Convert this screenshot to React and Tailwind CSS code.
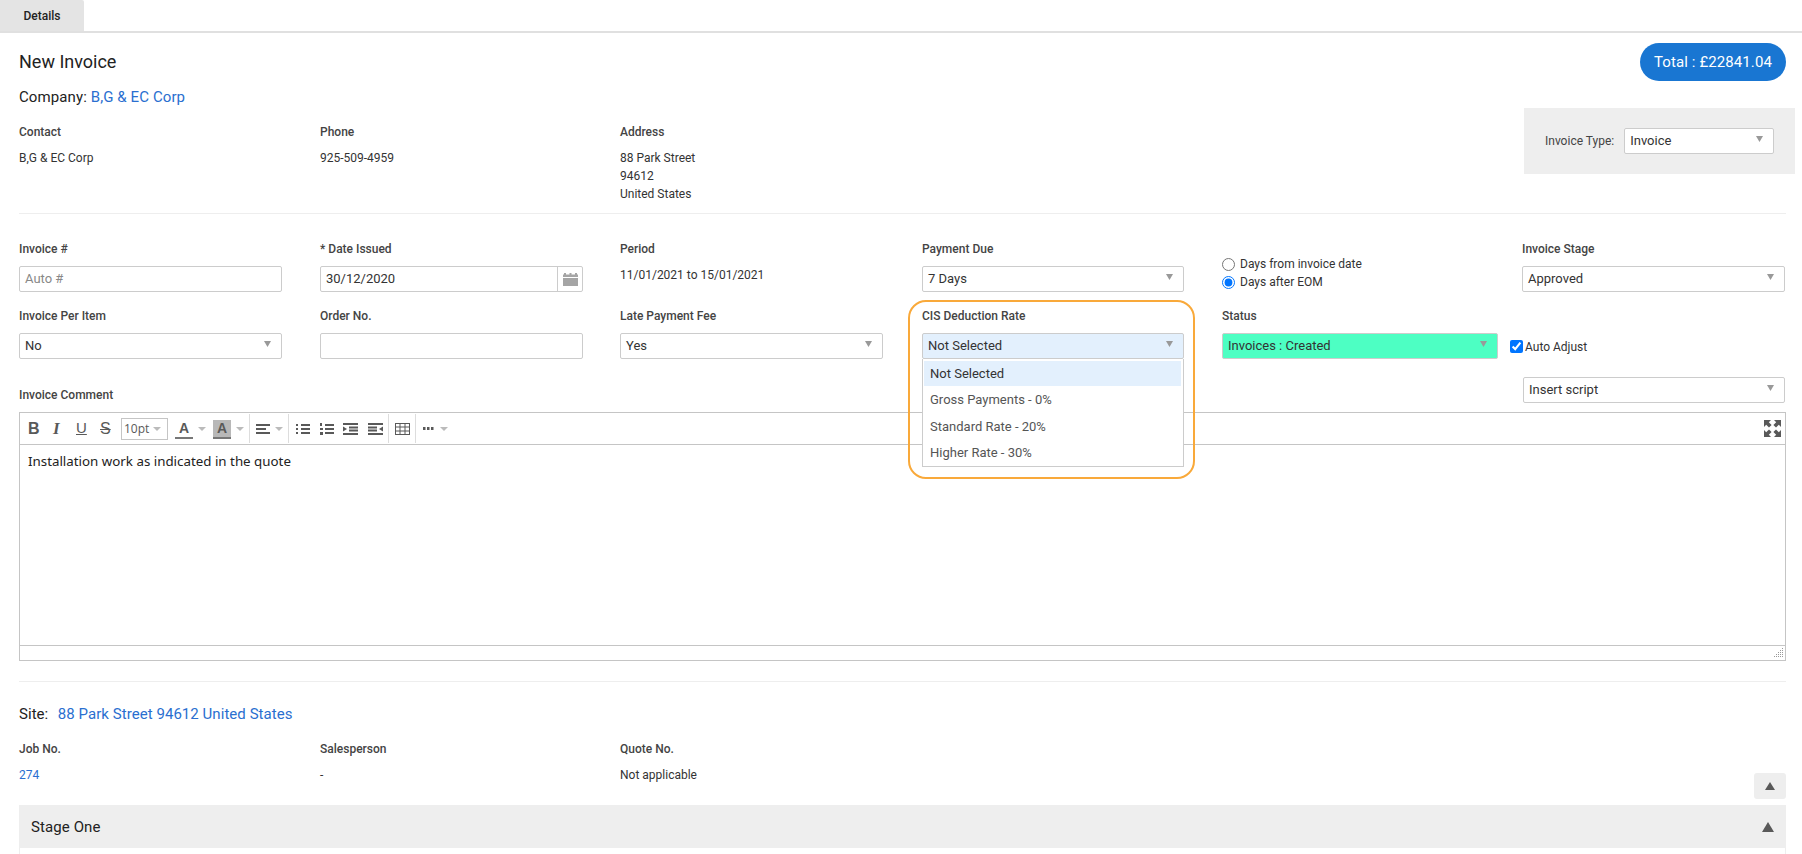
const roboto = "font-['Roboto',sans-serif]";

// ── Helpers ───────────────────────────────────────────────────────────────────
const Caret = ({ className = 'text-[#999]', w = 7, h = 6 }) => (
  <svg width={w} height={h} viewBox="0 0 8 7" preserveAspectRatio="none" className={`fill-current shrink-0 ${className}`}>
    <path d="M0 0h8L4 7z" />
  </svg>
);

const Label = ({ children }) => (
  <div className="text-[12px] leading-[18px] font-medium text-[#444]">{children}</div>
);

const Select = ({ value, width = 'w-[263px]', bg = 'bg-white' }) => (
  <div className={`flex items-center justify-between h-[26px] ${width} ${bg} rounded-[2px] border border-[#ccc] pl-[5px] pr-[10px] text-[13px] text-[#333]`}>
    <span>{value}</span>
    <Caret className="text-[#999] mb-[4px]" />
  </div>
);

const Sep = ({ className = '' }) => <div className={`w-px h-[29px] bg-[#ddd] shrink-0 ${className}`} />;

const Bars = ({ className = '', children }) => (
  <svg width="15" height="12" viewBox="0 0 15 12" className={`fill-[#595959] shrink-0 ${className}`}>{children}</svg>
);

const ArrowDown = ({ className = '' }) => <Caret className={`text-[#bbb] ${className}`} w={8} h={4} />;

function Toolbar() {
  return (
    <div className="flex items-center h-[32px] border-b border-[#c5c5c5] pl-[8px] pr-[4px] text-[#595959]">
      <span className="w-[23px] font-bold text-[16px] font-['Liberation_Sans',sans-serif]">B</span>
      <span className="w-[25px] pl-[2px] italic font-bold text-[17px] font-['Liberation_Serif',serif]">I</span>
      <span className="w-[22px] underline text-[15px] font-['Liberation_Sans',sans-serif]">U</span>
      <span className="w-[23px] pl-[2px] line-through text-[16px] font-['Liberation_Sans',sans-serif]">S</span>
      <div className="flex items-center justify-between w-[47px] h-[22px] border border-[#c5c5c5] pl-[2px] pr-[6px] text-[12px] font-['Open_Sans',sans-serif]">
        10pt <ArrowDown />
      </div>
      <div className="ml-[7px] w-[18px] h-[19px] mt-[1px] text-center text-[14px] leading-[16px] font-bold border-b-2 border-[#777] font-['Liberation_Sans',sans-serif]">A</div>
      <ArrowDown className="ml-[5px]" />
      <div className="ml-[7px] w-[18px] h-[19px] mt-[1px] text-center text-[14px] leading-[16px] font-bold bg-[#b8b8b8] border-b-2 border-[#777] font-['Liberation_Sans',sans-serif]">A</div>
      <ArrowDown className="ml-[5px]" />
      <Sep className="ml-[5px]" />
      <Bars className="ml-[6px]">
        <rect y="1" width="14" height="2" /><rect y="5" width="10" height="2" /><rect y="9" width="14" height="2" />
      </Bars>
      <ArrowDown className="ml-[4px]" />
      <Sep className="ml-[5px]" />
      <Bars className="ml-[7px]">
        <rect y="1" width="2" height="2" /><rect x="5" y="1" width="9" height="2" />
        <rect y="5" width="2" height="2" /><rect x="5" y="5" width="9" height="2" />
        <rect y="9" width="2" height="2" /><rect x="5" y="9" width="9" height="2" />
      </Bars>
      <Bars className="ml-[9px]">
        <rect y="0" width="2" height="3" /><rect x="5" y="1" width="9" height="2" />
        <rect y="5" width="3" height="2" /><rect x="5" y="5" width="9" height="2" />
        <rect y="9" width="3" height="3" /><rect x="5" y="9" width="9" height="2" />
      </Bars>
      <Bars className="ml-[8px]">
        <rect y="0" width="15" height="2" /><rect x="6" y="3.5" width="9" height="2" /><rect x="6" y="6.5" width="9" height="2" /><rect y="10" width="15" height="2" />
        <path d="M0 3.5l4 2.5-4 2.5z" />
      </Bars>
      <Bars className="ml-[10px]">
        <rect y="0" width="15" height="2" /><rect y="3.5" width="9" height="2" /><rect y="6.5" width="9" height="2" /><rect y="10" width="15" height="2" />
        <path d="M15 3.5l-4 2.5 4 2.5z" />
      </Bars>
      <Sep className="ml-[5px]" />
      <svg width="15" height="12" viewBox="0 0 15 12" className="ml-[6px] shrink-0 stroke-[#595959]" fill="none">
        <rect x=".5" y=".5" width="14" height="11" />
        <path d="M.5 4h14M.5 8h14M5 .5v11M10 .5v11" />
      </svg>
      <Sep className="ml-[5px]" />
      <svg width="11" height="3" className="ml-[7px] fill-[#595959] shrink-0">
        <rect width="2.5" height="3" /><rect x="4" width="2.5" height="3" /><rect x="8" width="2.5" height="3" />
      </svg>
      <ArrowDown className="ml-[6px]" />
      <svg width="17" height="17" viewBox="0 0 17 17" className="ml-auto fill-[#595959]">
        <path d="M0 0h7L4.8 2.2 7.6 5 5 7.6 2.2 4.8 0 7zM17 0v7l-2.2-2.2L12 7.6 9.4 5l2.8-2.8L10 0zM0 17v-7l2.2 2.2L5 9.4 7.6 12l-2.8 2.8L7 17zM17 17h-7l2.2-2.2L9.4 12 12 9.4l2.8 2.8L17 10z" />
      </svg>
    </div>
  );
}

export default function App() {
  return (
    <div className={`relative h-[854px] overflow-hidden bg-white ${roboto} text-[#333]`}>
      {/* Tabs */}
      <div className="h-[33px] border-b-2 border-[#e0e0e0]">
        <div className="flex items-center justify-center w-[84px] h-[31px] rounded-tr-[2px] bg-[#e4e4e4] text-[12px] font-medium text-[#222]">
          Details
        </div>
      </div>

      <div className="pl-[19px] pr-[16px]">
        {/* Header */}
        <div className="flex items-center justify-between h-[48px] pt-[10px]">
          <h1 className="mb-[1px] text-[18px] text-[#222]">New Invoice</h1>
          <div className="flex items-center justify-center w-[146px] h-[38px] rounded-full bg-[#1976d2] text-white text-[15px] tracking-[0.1px]">
            Total : £22841.04
          </div>
        </div>

        <div className="h-[27px] pt-[5px] text-[15px] tracking-[0.1px] leading-[22px] text-[#222]">
          Company: <span className="text-[#2a6fd0]">B,G &amp; EC Corp</span>
        </div>

        {/* Contact info + invoice type */}
        <div className="flex justify-between h-[106px] border-b border-[#eee]">
          <div className="grid grid-cols-[301px_300px_300px] pt-[15px] content-start">
            <Label>Contact</Label>
            <Label>Phone</Label>
            <Label>Address</Label>
            <div className="mt-[8px] text-[12px] leading-[18px]">B,G &amp; EC Corp</div>
            <div className="mt-[8px] text-[12px] leading-[18px]">925-509-4959</div>
            <div className="mt-[8px] text-[12px] leading-[18px]">88 Park Street<br />94612<br />United States</div>
          </div>
          <div className="flex items-center self-start gap-[10px] h-[66px] w-[271px] -mr-[9px] pl-[21px] bg-[#eee] text-[12px] text-[#444]">
            Invoice Type:
            <Select value="Invoice" width="w-[150px]" />
          </div>
        </div>

        {/* Form rows */}
        <div className="grid grid-cols-[301px_300px_302px_300px_300px_263px] gap-y-[15px] pt-[26px]">
          <div className="flex flex-col gap-[8px]">
            <Label>Invoice #</Label>
            <div className="flex items-center h-[26px] w-[263px] rounded-[2px] border border-[#ccc] pl-[5px] text-[13px] text-[#888]">Auto #</div>
          </div>
          <div className="flex flex-col gap-[8px]">
            <Label>* Date Issued</Label>
            <div className="flex items-center justify-between h-[26px] w-[263px] rounded-[2px] border border-[#ccc] pl-[5px] text-[13px]">
              30/12/2020
              <div className="flex items-center justify-center w-[25px] h-full border-l border-[#ccc]">
                <svg width="15" height="13" viewBox="0 0 15 13" className="fill-[#a5a5a5]">
                  <path d="M1 0h2v1.5H1zM6.500 0h2v1.5h-2zM12 0h2v1.5h-2zM0 1.500h15v2.500H0zM0 5h15v8H0z" />
                </svg>
              </div>
            </div>
          </div>
          <div className="flex flex-col gap-[8px]">
            <Label>Period</Label>
            <div className="text-[12px] leading-[18px]">11/01/2021 to 15/01/2021</div>
          </div>
          <div className="flex flex-col gap-[8px]">
            <Label>Payment Due</Label>
            <Select value="7 Days" width="w-[262px]" />
          </div>
          <div className="flex flex-col justify-end pb-[1px] text-[12px] leading-[18px]">
            <label className="flex items-center gap-[5px]">
              <input type="radio" name="due" className="m-0 w-[13px] h-[13px]" /> Days from invoice date
            </label>
            <label className="flex items-center gap-[5px]">
              <input type="radio" name="due" defaultChecked className="m-0 w-[13px] h-[13px]" /> Days after EOM
            </label>
          </div>
          <div className="flex flex-col gap-[8px]">
            <Label>Invoice Stage</Label>
            <Select value="Approved" />
          </div>

          <div className="flex flex-col gap-[8px]">
            <Label>Invoice Per Item</Label>
            <Select value="No" />
          </div>
          <div className="flex flex-col gap-[8px]">
            <Label>Order No.</Label>
            <div className="h-[26px] w-[263px] rounded-[2px] border border-[#ccc]" />
          </div>
          <div className="flex flex-col gap-[8px]">
            <Label>Late Payment Fee</Label>
            <Select value="Yes" />
          </div>
          <div className="relative flex flex-col gap-[8px]">
            <Label>CIS Deduction Rate</Label>
            <Select value="Not Selected" width="w-[262px]" bg="bg-[#e3f0fd]" />
            {/* Open dropdown */}
            <div className="absolute z-20 top-[52px] left-0 w-[262px] h-[108px] bg-white border border-t-0 border-[#ccc] pt-[2px] pl-[1px] pr-[2px] text-[13px] text-[#555]">
              {['Not Selected', 'Gross Payments - 0%', 'Standard Rate - 20%', 'Higher Rate - 30%'].map((opt, i) => (
                <div key={opt} className={`flex items-center h-[25px] mb-[1.4px] pl-[6px] ${i === 0 ? 'bg-[#e3f0fd] text-[#333]' : ''}`}>{opt}</div>
              ))}
            </div>
          </div>
          <div className="flex flex-col gap-[8px] col-span-2">
            <Label>Status</Label>
            <div className="flex items-center gap-[12px]">
              <Select value="Invoices : Created" width="w-[276px]" bg="bg-[#4dffc3]" />
              <label className="flex items-center gap-[2px] mt-[1px] text-[12px]">
                <input type="checkbox" defaultChecked className="m-0 w-[13px] h-[13px]" /> Auto Adjust
              </label>
            </div>
          </div>
        </div>

        {/* Comment label + insert script */}
        <div className="flex justify-between h-[35px] mt-[18px] pr-[1px]">
          <div className="self-end mb-[8px]"><Label>Invoice Comment</Label></div>
          <Select value="Insert script" width="w-[262px]" />
        </div>

        {/* Editor */}
        <div className="border border-[#c5c5c5] h-[249px] flex flex-col">
          <Toolbar />
          <div className="flex-1 pl-[8px] pt-[7px] text-[13.33px] text-[#222] font-['Noto_Sans',sans-serif]">
            Installation work as indicated in the quote
          </div>
          <div className="flex justify-end items-end h-[15px] border-t border-[#c5c5c5] pr-[1px] pb-[2px]">
            <svg width="10" height="10" className="fill-[#999]">
              {[[8, 0], [8, 2], [6, 2], [8, 4], [6, 4], [4, 4], [8, 6], [6, 6], [4, 6], [2, 6], [8, 8], [6, 8], [4, 8], [2, 8], [0, 8]].map(([x, y]) => (
                <rect key={`${x}-${y}`} x={x} y={y} width="1" height="1" />
              ))}
            </svg>
          </div>
        </div>

        <div className="border-b border-[#eee] h-[21px]" />

        {/* Site */}
        <div className="pt-[21px] text-[15px] tracking-[0.05px] leading-[22px] text-[#222]">
          Site:&nbsp; <span className="ml-[2px] text-[#2a6fd0]">88 Park Street 94612 United States</span>
        </div>

        <div className="grid grid-cols-[301px_300px_1fr_32px] mt-[15px]">
          <Label>Job No.</Label>
          <Label>Salesperson</Label>
          <Label>Quote No.</Label>
          <div />
          <div className="mt-[8px] text-[12px] leading-[18px] text-[#2a6fd0]">274</div>
          <div className="mt-[8px] text-[12px] leading-[18px]">-</div>
          <div className="mt-[8px] text-[12px] leading-[18px]">Not applicable</div>
          <div className="flex items-center justify-center h-[26px] mt-[15px] rounded-[3px] bg-[#eee]">
            <Caret className="text-[#595959] rotate-180" w={10} h={8} />
          </div>
        </div>

        {/* Stage band */}
        <div className="flex items-center justify-between h-[43px] mt-[6px] pl-[12px] pr-[12px] pt-[1px] bg-[#eee] text-[15px] tracking-[0.1px] text-[#222]">
          Stage One
          <Caret className="text-[#595959] rotate-180" w={12} h={10} />
        </div>
        <div className="h-[6px] border-x border-[#eee]" />
      </div>

      {/* Callout */}
      <div className="absolute z-30 left-[908px] top-[300px] w-[287px] h-[179px] rounded-[18px] border-2 border-[#f9a93a] pointer-events-none" />
    </div>
  );
}
